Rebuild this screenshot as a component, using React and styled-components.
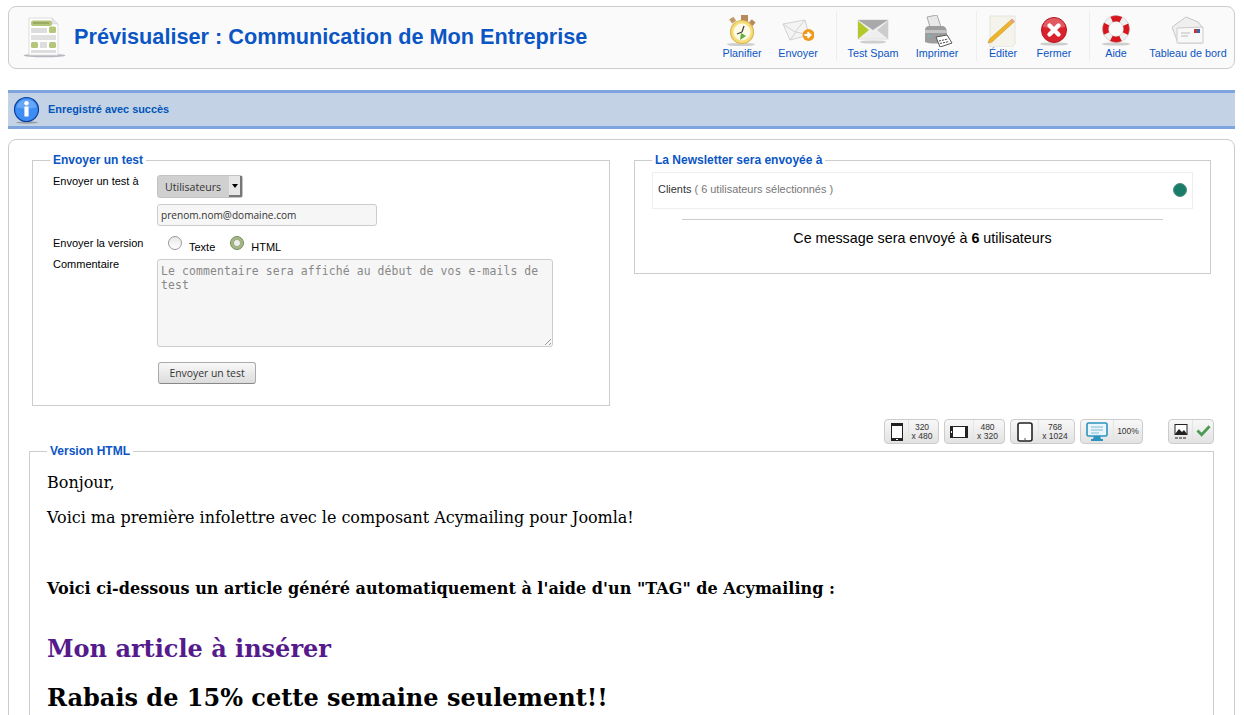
import React from "react";
import styled, { createGlobalStyle } from "styled-components";

const Global = createGlobalStyle`
  html, body { margin: 0; padding: 0; height: 715px; overflow: hidden; background: #fff; }
  body { font-family: "Liberation Sans", Arial, sans-serif; }
`;
const Page = styled.div`
  padding: 6px 9px 0 8px;
  display: flex;
  flex-direction: column;
`;
const Header = styled.header`
  height: 63px;
  box-sizing: border-box;
  border: 1px solid #ccc;
  border-radius: 8px;
  background: #fafafa;
  display: flex;
  align-items: center;
  padding: 0 0 0 14px;
`;
const Title = styled.h1`
  margin: -2px 0 0 7px;
  font-size: 21.7px;
  font-weight: bold;
  color: #0b55c4;
  flex: 1;
  white-space: nowrap;
`;
const Toolbar = styled.nav`
  display: flex;
  align-items: stretch;
  height: 50px;
  margin-top: -3px;
`;
const ToolGroup = styled.div`
  display: flex;
  border-right: ${(p) => (p.$last ? "none" : "1px solid #eee")};
  padding-right: ${(p) => p.$pr || 0}px;
`;
const Tool = styled.a`
  width: ${(p) => p.$w}px;
  display: flex;
  flex-direction: column;
  align-items: center;
  justify-content: flex-end;
  color: #0b55c4;
  font-size: 10.8px;
  line-height: 13px;
  padding-bottom: 1px;
  white-space: nowrap;
  svg { display: block; }
`;
const Message = styled.div`
  margin-top: 21px;
  height: 39px;
  box-sizing: border-box;
  border-top: 3px solid #7ea5df;
  border-bottom: 3px solid #7ea5df;
  background: #c3d2e5;
  display: flex;
  align-items: center;
  padding-left: 5px;
  gap: 7px;
  color: #0055bb;
  font-size: 10.9px;
  font-weight: bold;
  span { margin-top: -2px; }
`;
const Panel = styled.main`
  margin-top: 10px;
  height: 600px;
  box-sizing: border-box;
  border: 1px solid #ccc;
  border-radius: 8px;
  padding: 14px 20px 0 20px;
  background: #fff;
`;
const Columns = styled.div`
  display: grid;
  grid-template-columns: 578px 577px;
  gap: 24px;
  margin: 0 3px;
  align-items: start;
`;
const Field = styled.fieldset`
  margin: 0;
  box-sizing: border-box;
  border: 1px solid #ccc;
  padding: 0;
  height: ${(p) => p.$h}px;
  min-width: 0;
`;
const Legend = styled.legend`
  margin-left: ${(p) => (p.$ml === undefined ? 17 : p.$ml)}px;
  padding: 0 3px;
  color: #0b55c4;
  font-family: "Liberation Sans", Arial, sans-serif;
  font-size: 12px;
  line-height: 13px;
  font-weight: bold;
`;
const FormGrid = styled.div`
  display: grid;
  grid-template-columns: 104px 1fr;
  padding: 8px 0 0 20px;
  font-size: 11px;
  color: #000;
`;
const Label = styled.div`
  line-height: 13px;
  padding-top: ${(p) => p.$top || 0}px;
`;
const Value = styled.div`
  padding-top: ${(p) => p.$top || 0}px;
  display: ${(p) => (p.$flex ? "flex" : "block")};
  align-items: center;
`;
const SelectBox = styled.div`
  width: 86px;
  height: 23px;
  box-sizing: border-box;
  border: 1px solid #c4c4c4;
  border-radius: 3px;
  background: #d0d0d0;
  display: flex;
  align-items: center;
  justify-content: space-between;
  font-family: "Open Sans", sans-serif;
  font-size: 10.6px;
  color: #333;
  padding-left: 7px;
`;
const SelectArrow = styled.span`
  width: 13px;
  height: 21px;
  box-sizing: border-box;
  background: #e6e6e6;
  border-right: 2px solid #777;
  border-bottom: 2px solid #777;
  display: flex;
  align-items: center;
  justify-content: center;
  &::after {
    content: "";
    border: 3px solid transparent;
    border-top: 4px solid #000;
    border-bottom: 0;
  }
`;
const TextInput = styled.div`
  width: 220px;
  height: 22px;
  box-sizing: border-box;
  border: 1px solid #ccc;
  border-radius: 3px;
  background: #f6f6f6;
  font-family: "Open Sans", sans-serif;
  font-size: 10.1px;
  line-height: 20px;
  color: #333;
  padding-left: 3px;
`;
const Radio = styled.span`
  width: 14px;
  height: 14px;
  box-sizing: border-box;
  border-radius: 50%;
  border: 1px solid ${(p) => (p.$on ? "#6d8a52" : "#999")};
  background: ${(p) => (p.$on ? "radial-gradient(circle, #eee 0 2.5px, #9fb07f 3.5px, #b8c7a0 100%)" : "linear-gradient(#e8e8e8,#fff)")};
  margin-left: ${(p) => p.$ml}px;
  margin-top: -5px;
`;
const RadioText = styled.span`
  margin-left: 7px;
  padding-top: 4px;
  font-size: 11px;
`;
const Area = styled.div`
  width: 396px;
  height: 88px;
  box-sizing: border-box;
  border: 1px solid #ccc;
  border-radius: 3px;
  background: #f6f6f6;
  font-family: "DejaVu Sans Mono", monospace;
  font-size: 11.4px;
  letter-spacing: 0.13px;
  line-height: 14px;
  color: #888;
  padding: 4px 3px;
  position: relative;
  &::after {
    content: "";
    position: absolute;
    right: 1px;
    bottom: 1px;
    width: 9px;
    height: 9px;
    background: repeating-linear-gradient(135deg, transparent 0 2px, #999 2px 3px);
    clip-path: polygon(100% 0, 100% 100%, 0 100%);
  }
`;
const SendButton = styled.button`
  margin: 15px 0 0 1px;
  width: 98px;
  height: 22px;
  padding: 0;
  display: block;
  border: 1px solid #aaa;
  border-bottom-color: #888;
  border-radius: 3px;
  background: linear-gradient(#f8f8f8, #dcdcdc);
  font-family: "Open Sans", sans-serif;
  font-size: 10.4px;
  color: #333;
`;
const ListRow = styled.div`
  height: 37px;
  box-sizing: border-box;
  margin: 5px 17px 0;
  border: 1px solid #eee;
  display: flex;
  align-items: center;
  justify-content: space-between;
  padding: 0 5px;
  font-size: 10.95px;
  color: #333;
  > span { margin-top: -3px; }
  span span { color: #777; }
`;
const Dot = styled.i`
  width: 14px;
  height: 14px;
  border-radius: 50%;
  background: #1a7d69;
  border: 1px solid #4c8f80;
  box-sizing: border-box;
  margin-top: -1px;
`;
const Rule = styled.hr`
  margin: 10px 47px 0;
  border: 0;
  border-top: 1px solid #ccc;
`;
const Count = styled.div`
  margin-top: 9px;
  text-align: center;
  font-size: 14.3px;
  line-height: 18px;
  color: #000;
`;
const Devices = styled.div`
  display: flex;
  justify-content: flex-end;
  align-items: center;
  margin: 13px 0 0;
  height: 25px;
`;
const DeviceBtn = styled.div`
  width: ${(p) => p.$w}px;
  height: 25px;
  box-sizing: border-box;
  margin-left: ${(p) => p.$ml || 5}px;
  border: 1px solid #ccc;
  border-radius: 4px;
  background: linear-gradient(#f8f8f8, #e2e2e2);
  display: flex;
  align-items: center;
  overflow: hidden;
`;
const DeviceIcon = styled.div`
  width: ${(p) => p.$w}px;
  height: 100%;
  display: flex;
  align-items: center;
  justify-content: center;
  flex: none;
  border-right: 1px solid #e4e4e4;
`;
const DeviceText = styled.div`
  flex: 1;
  text-align: center;
  padding-right: ${(p) => (p.$flat ? 0 : 3)}px;
  font-family: "Liberation Sans", sans-serif;
  font-size: 8.5px;
  line-height: 9px;
  color: #333;
  white-space: nowrap;
`;
const Preview = styled.fieldset`
  margin: 1px 0 0;
  border: 1px solid #ccc;
  border-bottom: 0;
  padding: 15px 17px 0;
  min-width: 0;
  height: 280px;
  box-sizing: border-box;
  font-family: "DejaVu Serif", serif;
  font-size: 16px;
  line-height: 19px;
  color: #000;
`;
const Para = styled.p`
  margin: 0 0 ${(p) => p.$mb}px;
  font-size: 16px;
  letter-spacing: ${(p) => p.$ls || 0}px;
`;
const Heading = styled.h2`
  margin: ${(p) => p.$mt || 0}px 0 0;
  font-size: ${(p) => p.$size}px;
  line-height: ${(p) => p.$lh}px;
  color: ${(p) => p.$color || "#000"};
  font-weight: bold;
`;

const Shadow = ({ x = 16, y = 29, rx = 14 }) => (
  <ellipse cx={x} cy={y} rx={rx} ry="1.6" fill="#aaa" opacity="0.55" />
);
const Icon = ({ children, w = 32, h = 32 }) => (
  <svg width={w} height={h} viewBox={`0 0 ${w} ${h}`}>{children}</svg>
);
const Planifier = () => (
  <Icon>
    <Shadow x={15} y={29.5} />
    <rect x="15" y="0" width="7" height="7" fill="#b8895a" />
    <rect x="4" y="3" width="5" height="5" fill="#c09a66" transform="rotate(-35 6 5)" />
    <rect x="24" y="5" width="5" height="5" fill="#b8895a" transform="rotate(40 26 7)" />
    <circle cx="16" cy="17" r="11.5" fill="#f6de7c" stroke="#d9b654" strokeWidth="1.2" />
    <circle cx="16" cy="17" r="8.5" fill="#fdfbe8" />
    <path d="M16 17l-5 2M16 17l2-6" stroke="#444" strokeWidth="1.3" />
    <path d="M14 25l1-7 5 3z" fill="#5fae3c" />
  </Icon>
);
const Envoyer = () => (
  <Icon>
    <path d="M1 9L23 5l4 15-19 5z" fill="#f4f4f4" stroke="#d2d2d2" />
    <path d="M1 9l12 8 10-12M8 25l6-8 13 3" fill="none" stroke="#d2d2d2" />
    <circle cx="26.5" cy="20" r="6" fill="#f09a1c" />
    <path d="M22.5 20h5M25.5 17.2l3 2.8-3 2.8" stroke="#fff" strokeWidth="2" fill="none" />
  </Icon>
);
const Spam = () => (
  <Icon>
    <Shadow y={27} rx={13} />
    <rect x="1" y="5" width="30" height="19" fill="#efefef" stroke="#e0e0e0" />
    <path d="M1 5h30L16 15z" fill="#a9a9a9" />
    <path d="M1 6l11 9L1 24z" fill="#b3c92a" />
    <path d="M31 6l-11 9 11 9z" fill="#cdcdcd" />
  </Icon>
);
const Printer = () => (
  <Icon>
    <path d="M6 2l10-2 4 12H9z" fill="#e8e8e8" stroke="#aaa" />
    <path d="M4 15c0-3 2-4 4-4h13c2 0 4 1 5 5v11c-8 2-17 2-22 0z" fill="#9d9d9d" />
    <path d="M4 15h22v3H4z" fill="#c4c4c4" />
    <path d="M15 22l11-2 5 8-12 4z" fill="#fff" stroke="#555" />
    <path d="M18 26l9-2M19 28.5l9-2" stroke="#444" strokeDasharray="2 1" />
    <circle cx="8" cy="21" r="1" fill="#5cc" />
  </Icon>
);
const Edit = () => (
  <Icon>
    <path d="M3 1h25v28l-3 3H3z" fill="#f4f4ec" stroke="#e4e4dc" />
    <path d="M25 4l2.5 2.5L5 27l-4 1 1.5-4z" fill="#f0b429" stroke="#bd8a1c" strokeWidth="0.5" />
    <path d="M25 4l2.5 2.5-2 2-2.5-2.5z" fill="#e9a090" />
  </Icon>
);
const Close = () => (
  <Icon>
    <Shadow />
    <circle cx="16" cy="15" r="12.5" fill="#d9222c" stroke="#b5161f" />
    <path d="M5 12a11 9 0 0 1 22 0 20 8 0 0 1-22 0z" fill="#fff" opacity="0.25" />
    <path d="M11.5 10.5l9 9M20.5 10.5l-9 9" stroke="#fff" strokeWidth="4.4" strokeLinecap="round" />
  </Icon>
);
const Help = () => (
  <Icon>
    <Shadow />
    <circle cx="16" cy="14" r="10.5" fill="none" stroke="#f0f0f0" strokeWidth="6" />
    <circle cx="16" cy="14" r="10.5" fill="none" stroke="#d8141c" strokeWidth="6" strokeDasharray="9.5 7" strokeDashoffset="4.75" />
    <circle cx="16" cy="14" r="13.5" fill="none" stroke="#aaa" strokeWidth="0.4" />
    <circle cx="16" cy="14" r="7.5" fill="none" stroke="#aaa" strokeWidth="0.4" />
  </Icon>
);
const Dash = () => (
  <Icon>
    <path d="M0 12L14 2l12 5 4 5v16H6z" fill="#efefef" stroke="#c6c6c6" />
    <path d="M5 13l26-1v16H5z" fill="#f8f8f8" stroke="#ccc" />
    <path d="M9 18h9M9 21h7" stroke="#bbb" />
    <rect x="22" y="14" width="3" height="4" fill="#c33" />
    <rect x="25" y="14" width="3" height="4" fill="#36a" />
  </Icon>
);
const PageIcon = () => (
  <svg width="44" height="44" viewBox="0 0 44 44">
    <ellipse cx="21.5" cy="39.5" rx="21" ry="1.8" fill="#8a8a9a" opacity="0.6" />
    <path d="M6 2h23l6 6v31H6z" fill="#fff" stroke="#ddd" />
    <path d="M29 2v6h6z" fill="#e6e6e6" stroke="#ccc" strokeWidth="0.5" />
    <rect x="8" y="4.5" width="21" height="5.5" rx="2" fill="#b4c67a" />
    <path d="M10 7h16" stroke="#7f8f50" />
    <rect x="8" y="12" width="16" height="5" fill="#ddd" />
    <rect x="26" y="10.5" width="7" height="6.5" rx="1.5" fill="#b4c67a" />
    <rect x="8" y="19" width="25" height="5" fill="#e0e0e0" />
    <rect x="8" y="26" width="7" height="6" rx="1.5" fill="#b4c67a" />
    <rect x="17" y="26" width="7" height="6" fill="#ddd" />
    <rect x="26" y="26" width="7" height="6" rx="1.5" fill="#b4c67a" />
    <rect x="8" y="34" width="25" height="3" fill="#ddd" />
  </svg>
);
const InfoIcon = () => (
  <svg width="28" height="28" viewBox="0 0 28 28">
    <ellipse cx="14" cy="26.5" rx="11" ry="1.2" fill="#666" opacity="0.5" />
    <circle cx="13.5" cy="13.5" r="12" fill="#3d8df5" stroke="#0d3f9c" strokeWidth="1.2" />
    <path d="M3.5 11.5a10 8 0 0 1 20 0 20 7 0 0 1-20 0z" fill="#fff" opacity="0.22" />
    <rect x="11.4" y="10.5" width="4.2" height="10" rx="0.6" fill="#fff" />
    <circle cx="13.5" cy="7.3" r="2.2" fill="#fff" />
  </svg>
);
const PhoneV = ({ w = 12, h = 18 }) => (
  <svg width={w} height={h} viewBox="0 0 12 18">
    <rect x="0.5" y="0.5" width="11" height="17" rx="1.5" fill="#fff" stroke="#222" />
    <rect x="0" y="0" width="12" height="3" fill="#222" />
    <rect x="0" y="15" width="12" height="3" fill="#222" />
    <path d="M5 16.5h2" stroke="#fff" />
  </svg>
);
const PhoneH = () => (
  <svg width="18" height="12" viewBox="0 0 18 12">
    <rect x="0.5" y="0.5" width="17" height="11" rx="1.5" fill="#fff" stroke="#222" />
    <rect x="0" y="0" width="3" height="12" fill="#222" />
    <rect x="15" y="0" width="3" height="12" fill="#222" />
    <path d="M1.5 5v2" stroke="#fff" />
  </svg>
);
const Tablet = () => (
  <svg width="16" height="20" viewBox="0 0 16 20">
    <rect x="1" y="1" width="14" height="18" rx="2" fill="#fff" stroke="#222" strokeWidth="1.6" />
    <path d="M7 17h2" stroke="#555" />
  </svg>
);
const Desktop = () => (
  <svg width="22" height="20" viewBox="0 0 22 20">
    <rect x="1" y="1" width="20" height="13" rx="1.5" fill="#eaf6fb" stroke="#2b93bd" strokeWidth="1.6" />
    <path d="M5 5h12M5 8h12M5 11h8" stroke="#7cbcd6" />
    <path d="M8 14h6l1 3H7z" fill="#2b93bd" />
    <rect x="5" y="17" width="12" height="2" fill="#2b93bd" />
  </svg>
);
const PictureIcon = () => (
  <svg width="14" height="16" viewBox="0 0 14 16">
    <rect x="1" y="0.5" width="12" height="10" fill="#fff" stroke="#222" />
    <path d="M1 10l4-5 3 3 2-2 3 4z" fill="#222" />
    <path d="M1 14h12" stroke="#222" strokeDasharray="3 1" />
  </svg>
);
const Check = () => (
  <svg width="15" height="13" viewBox="0 0 16 14">
    <path d="M1.5 7l4.5 4.5L14.5 2.5" fill="none" stroke="#4d9a52" strokeWidth="3" />
  </svg>
);

export default function App() {
  return (
    <Page>
      <Global />
      <Header>
        <PageIcon />
        <Title>Prévisualiser : Communication de Mon Entreprise</Title>
        <Toolbar>
          <ToolGroup $pr={10}>
            <Tool $w={56}><Planifier />Planifier</Tool>
            <Tool $w={56}><Envoyer />Envoyer</Tool>
          </ToolGroup>
          <ToolGroup $pr={11}>
            <Tool $w={72}><Spam />Test Spam</Tool>
            <Tool $w={56}><Printer />Imprimer</Tool>
          </ToolGroup>
          <ToolGroup $pr={10}>
            <Tool $w={52}><Edit />Éditer</Tool>
            <Tool $w={50}><Close />Fermer</Tool>
          </ToolGroup>
          <ToolGroup $last>
            <Tool $w={52}><Help />Aide</Tool>
            <Tool $w={92}><Dash />Tableau de bord</Tool>
          </ToolGroup>
        </Toolbar>
      </Header>
      <Message><InfoIcon /><span>Enregistré avec succès</span></Message>
      <Panel>
        <Columns>
          <Field $h={252}>
            <Legend>Envoyer un test</Legend>
            <FormGrid>
              <Label>Envoyer un test à</Label>
              <Value><SelectBox>Utilisateurs<SelectArrow /></SelectBox></Value>
              <div />
              <Value $top={6}><TextInput>prenom.nom@domaine.com</TextInput></Value>
              <Label $top={11}>Envoyer la version</Label>
              <Value $top={11} $flex>
                <Radio $ml={11} /><RadioText>Texte</RadioText>
                <Radio $ml={15} $on /><RadioText>HTML</RadioText>
              </Value>
              <Label $top={5}>Commentaire</Label>
              <Value $top={6}><Area>Le commentaire sera affiché au début de vos e-mails de test</Area></Value>
              <div />
              <Value><SendButton>Envoyer un test</SendButton></Value>
            </FormGrid>
          </Field>
          <Field $h={120}>
            <Legend>La Newsletter sera envoyée à</Legend>
            <ListRow>
              <span>Clients <span>( 6 utilisateurs sélectionnés )</span></span>
              <Dot />
            </ListRow>
            <Rule />
            <Count>Ce message sera envoyé à <b>6</b> utilisateurs</Count>
          </Field>
        </Columns>
        <Devices>
          <DeviceBtn $w={55}><DeviceIcon $w={23}><PhoneV /></DeviceIcon><DeviceText>320<br />x 480</DeviceText></DeviceBtn>
          <DeviceBtn $w={61}><DeviceIcon $w={28}><PhoneH /></DeviceIcon><DeviceText>480<br />x 320</DeviceText></DeviceBtn>
          <DeviceBtn $w={65}><DeviceIcon $w={27}><Tablet /></DeviceIcon><DeviceText>768<br />x 1024</DeviceText></DeviceBtn>
          <DeviceBtn $w={63}><DeviceIcon $w={32}><Desktop /></DeviceIcon><DeviceText $flat>100%</DeviceText></DeviceBtn>
          <DeviceBtn $w={46} $ml={25}><DeviceIcon $w={23}><PictureIcon /></DeviceIcon><DeviceText $flat><Check /></DeviceText></DeviceBtn>
        </Devices>
        <Preview>
          <Legend $ml={0}>Version HTML</Legend>
          <Para $mb={16}>Bonjour,</Para>
          <Para $mb={52} $ls={-0.03}>Voici ma première infolettre avec le composant Acymailing pour Joomla!</Para>
          <Para $mb={37} $ls={0.02}><b>Voici ci-dessous un article généré automatiquement à l'aide d'un "TAG" de Acymailing :</b></Para>
          <Heading $size={24} $lh={28} $color="#551a8b">Mon article à insérer</Heading>
          <Heading $size={24} $lh={28} $mt={21}>Rabais de 15% cette semaine seulement!!</Heading>
        </Preview>
      </Panel>
    </Page>
  );
}
